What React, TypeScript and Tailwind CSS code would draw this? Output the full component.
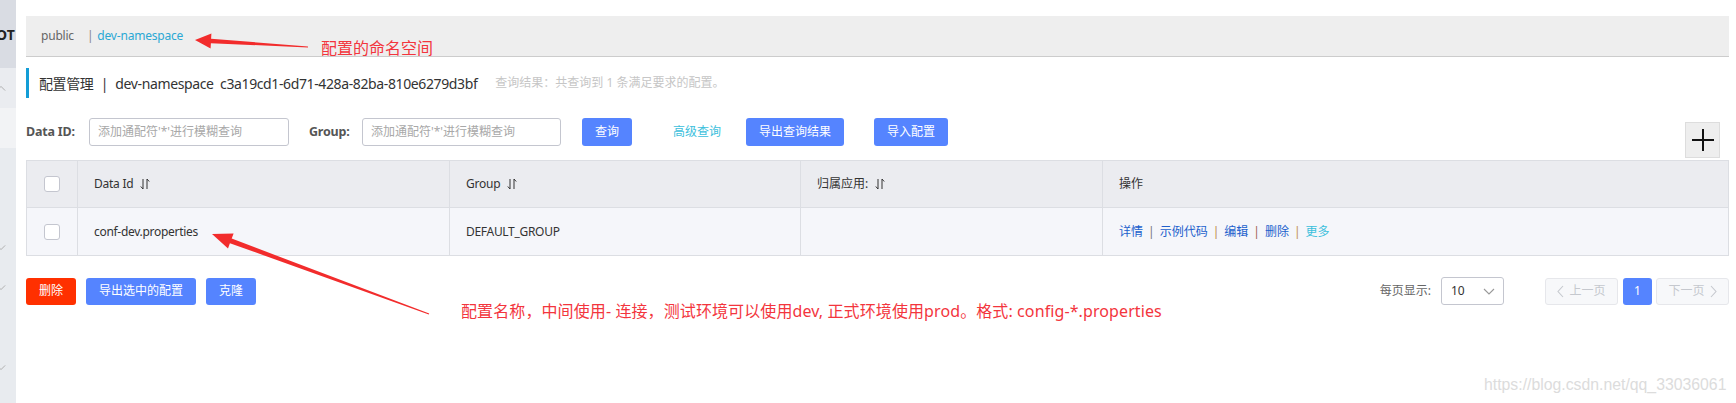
import React from "react";

const FONT = { fontFamily: '"Noto Sans", "Noto Sans CJK SC", sans-serif' };

function SortIcon() {
  return (
    <svg width="10" height="12" viewBox="0 0 10 12" className="ml-[7px]" fill="none" stroke="#333" strokeWidth="1">
      <path d="M3 1 V11 L0.8 8.5" />
      <path d="M7 11 V1 L9.2 3.5" />
    </svg>
  );
}

function Checkbox() {
  return <div className="w-[16px] h-[16px] bg-white border border-[#c4c6cf] rounded-[3px]" />;
}

function Chevron({ dir, className }: { dir: "up" | "down" | "left" | "right"; className?: string }) {
  const d =
    dir === "down" ? "M1 1 L6 6 L11 1" : dir === "up" ? "M1 6 L6 1 L11 6" : dir === "left" ? "M6 1 L1 6.5 L6 12" : "M1 1 L6 6.5 L1 12";
  const w = dir === "down" || dir === "up" ? 12 : 7;
  const h = dir === "down" || dir === "up" ? 7 : 13;
  return (
    <svg width={w} height={h} viewBox={`0 0 ${w} ${h}`} fill="none" stroke="currentColor" strokeWidth="1.1" className={className}>
      <path d={d} />
    </svg>
  );
}

export default function App() {
  return (
    <div className="relative w-[1736px] h-[403px] overflow-hidden bg-white flex text-[#333]" style={FONT}>
      {/* sidebar */}
      <div className="w-[16px] h-full flex flex-col shrink-0 overflow-hidden">
        <div className="h-[68px] bg-[#d9dce3] flex items-center overflow-hidden">
          <span className="text-[14px] font-bold text-[#222] -ml-[4px] whitespace-nowrap">OT</span>
        </div>
        <div className="h-[40px] bg-[#eaecf0] flex items-center">
          <Chevron dir="up" className="text-[#aaa] -ml-[4px] w-[10px]" />
        </div>
        <div className="h-[40px] bg-[#f2f3f5]" />
        <div className="flex-1 bg-[#e8ebef] flex flex-col">
          <Chevron dir="down" className="text-[#aaa] -ml-[4px] w-[10px] mt-[96px]" />
          <Chevron dir="down" className="text-[#aaa] -ml-[4px] w-[10px] mt-[33px]" />
          <Chevron dir="down" className="text-[#aaa] -ml-[4px] w-[10px] mt-[73px]" />
        </div>
      </div>

      {/* main */}
      <div className="ml-[10px] w-[1703px] flex flex-col pt-[16px]">
        {/* namespace bar */}
        <div className="h-[41px] bg-[#eeeeee] border-b border-[#cccccc] flex items-center pl-[15px] text-[12px] tracking-[-0.2px]">
          <span className="text-[#666]">public</span>
          <span className="ml-[13px] text-[#888]">|</span>
          <span className="ml-[4px] text-[#2ba8d4]">dev-namespace</span>
        </div>

        {/* title */}
        <div className="mt-[11px] h-[30px] flex items-center border-l-[3px] border-[#139dd6] pl-[10px]">
          <span className="text-[14px] text-[#333] whitespace-nowrap tracking-[-0.38px]">
            配置管理 <span className="mx-[4px]">|</span> dev-namespace&nbsp; c3a19cd1-6d71-428a-82ba-810e6279d3bf
          </span>
          <span className="ml-[18px] text-[12px] text-[#c6c6c6] whitespace-nowrap">查询结果：共查询到 1 条满足要求的配置。</span>
        </div>

        {/* search row */}
        <div className="mt-[20px] h-[42px] flex items-start text-[12px]">
          <div className="h-[28px] flex items-center">
            <span className="font-bold text-[#555] text-[12.5px] w-[51px] tracking-[-0.2px]">Data ID:</span>
            <div className="ml-[12px] w-[200px] h-[28px] border border-[#c4c6cf] rounded-[3px] flex items-center px-[8px] text-[#a8a8a8] bg-white">
              添加通配符'*'进行模糊查询
            </div>
            <span className="ml-[20px] font-bold text-[#555] text-[12.5px] w-[41px] tracking-[-0.2px]">Group:</span>
            <div className="ml-[12px] w-[199px] h-[28px] border border-[#c4c6cf] rounded-[3px] flex items-center px-[8px] text-[#a8a8a8] bg-white">
              添加通配符'*'进行模糊查询
            </div>
            <div className="ml-[21px] w-[50px] h-[28px] rounded-[3px] bg-[#5584ff] text-white flex items-center justify-center">查询</div>
            <span className="ml-[41px] text-[#3cc0dc]">高级查询</span>
            <div className="ml-[25px] w-[98px] h-[28px] rounded-[3px] bg-[#5584ff] text-white flex items-center justify-center">导出查询结果</div>
            <div className="ml-[30px] w-[74px] h-[28px] rounded-[3px] bg-[#5584ff] text-white flex items-center justify-center">导入配置</div>
          </div>
          <div className="ml-auto mr-[9px] mt-[4px] w-[35px] h-[36px] bg-[#eeeeee] border border-[#dddddd] flex items-center justify-center">
            <svg width="22" height="22" viewBox="0 0 22 22" stroke="#111" strokeWidth="2">
              <path d="M11 0 V22 M0 11 H22" />
            </svg>
          </div>
        </div>

        {/* table */}
        <div className="w-[1703px] border border-[#dcdee3] text-[12px]">
          <div className="grid grid-cols-[51px_372px_351px_302px_1fr] h-[47px] bg-[#ebecf0] border-b border-[#dcdee3]">
            <div className="flex items-center justify-center border-r border-[#dcdee3]"><Checkbox /></div>
            <div className="flex items-center pl-[16px] border-r border-[#dcdee3] tracking-[-0.25px]">Data Id<SortIcon /></div>
            <div className="flex items-center pl-[16px] border-r border-[#dcdee3] tracking-[-0.25px]">Group<SortIcon /></div>
            <div className="flex items-center pl-[16px] border-r border-[#dcdee3]">归属应用:<SortIcon /></div>
            <div className="flex items-center pl-[16px]">操作</div>
          </div>
          <div className="grid grid-cols-[51px_372px_351px_302px_1fr] h-[47px] bg-[#f5f6fa]">
            <div className="flex items-center justify-center border-r border-[#dcdee3]"><Checkbox /></div>
            <div className="flex items-center pl-[16px] border-r border-[#dcdee3] tracking-[-0.3px]">conf-dev.properties</div>
            <div className="flex items-center pl-[16px] border-r border-[#dcdee3] tracking-[-0.3px]">DEFAULT_GROUP</div>
            <div className="border-r border-[#dcdee3]" />
            <div className="flex items-center pl-[16px] text-[#2160cc]">
              <span>详情</span>
              <span className="mx-[5px] text-[#777]">|</span>
              <span>示例代码</span>
              <span className="mx-[5px] text-[#b9874a]">|</span>
              <span>编辑</span>
              <span className="mx-[5px] text-[#a06050]">|</span>
              <span>删除</span>
              <span className="mx-[5px] text-[#c0904a]">|</span>
              <span className="text-[#3cc0dc]">更多</span>
            </div>
          </div>
        </div>

        {/* bottom row */}
        <div className="mt-[21px] h-[28px] flex items-center text-[12px]">
          <div className="w-[50px] h-[27px] rounded-[3px] bg-[#ff3000] text-white flex items-center justify-center">删除</div>
          <div className="ml-[10px] w-[110px] h-[27px] rounded-[3px] bg-[#5584ff] text-white flex items-center justify-center">导出选中的配置</div>
          <div className="ml-[10px] w-[50px] h-[27px] rounded-[3px] bg-[#5584ff] text-white flex items-center justify-center">克隆</div>

          <div className="ml-auto flex items-center">
            <span className="text-[#666]">每页显示:</span>
            <div className="ml-[10px] w-[63px] h-[28px] border border-[#c4c6cf] rounded-[3px] bg-white flex items-center pl-[9px] pr-[8px]">
              <span className="text-[#333]">10</span>
              <Chevron dir="down" className="ml-auto text-[#999]" />
            </div>
            <div className="ml-[41px] w-[73px] h-[27px] border border-[#e6e7eb] bg-[#f7f8fa] rounded-[3px] flex items-center justify-center text-[#c5c8ce] gap-[5px]">
              <Chevron dir="left" />
              <span>上一页</span>
            </div>
            <div className="ml-[5px] w-[29px] h-[27px] rounded-[3px] bg-[#5584ff] text-white flex items-center justify-center">1</div>
            <div className="ml-[4px] w-[73px] h-[27px] border border-[#e6e7eb] bg-[#f7f8fa] rounded-[3px] flex items-center justify-center text-[#c5c8ce] gap-[5px]">
              <span>下一页</span>
              <Chevron dir="right" />
            </div>
          </div>
        </div>
      </div>

      {/* annotations overlay */}
      <svg className="absolute left-0 top-0 pointer-events-none" width="1736" height="403" viewBox="0 0 1736 403">
        <polygon fill="#f22c2c" points="195,40 211.4,33.5 211.1,38.8 308,46.5 308,47.5 210.9,43.2 210.6,48.5" />
        <polygon fill="#f22c2c" points="212,234 233.6,233.4 231.7,238.6 429.2,313.5 428.8,314.5 229.9,243.2 228,248.4" />
      </svg>
      <span className="absolute left-[321px] top-[37px] text-[16px] leading-[22px] text-[#f3353d] whitespace-nowrap" style={FONT}>
        配置的命名空间
      </span>
      <span className="absolute left-[461px] top-[300px] text-[16px] leading-[22px] text-[#f3353d] whitespace-nowrap tracking-[0.1px]" style={FONT}>
        配置名称，中间使用- 连接，测试环境可以使用dev, 正式环境使用prod。格式: config-*.properties
      </span>
      <span
        className="absolute left-[1484px] top-[374px] text-[15.8px] leading-[21px] text-[#dcdcdc] whitespace-nowrap"
        style={{ fontFamily: '"Liberation Sans", Arial, sans-serif' }}
      >
        https://blog.csdn.net/qq_33036061
      </span>
    </div>
  );
}
